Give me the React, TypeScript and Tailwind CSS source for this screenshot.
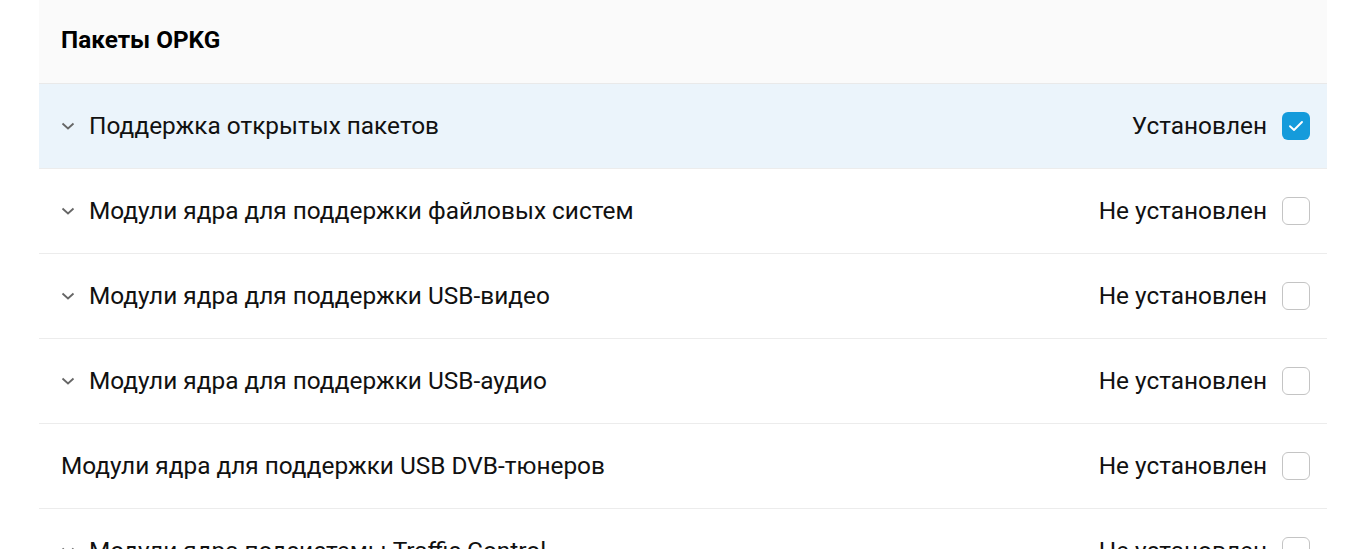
import { useState } from "react";

interface Pkg {
  id: number;
  name: string;
  installed: boolean;
  expandable: boolean;
}

const PACKAGES: Pkg[] = [
  { id: 1, name: "Поддержка открытых пакетов", installed: true, expandable: true },
  { id: 2, name: "Модули ядра для поддержки файловых систем", installed: false, expandable: true },
  { id: 3, name: "Модули ядра для поддержки USB-видео", installed: false, expandable: true },
  { id: 4, name: "Модули ядра для поддержки USB-аудио", installed: false, expandable: true },
  { id: 5, name: "Модули ядра для поддержки USB DVB-тюнеров", installed: false, expandable: false },
  { id: 6, name: "Модули ядра подсистемы Traffic Control", installed: false, expandable: true },
];

function Chevron() {
  return (
    <svg width="14" height="8" viewBox="0 0 14 8" className="shrink-0 text-[#666]" aria-hidden>
      <path d="M1.5 1.5 7 6.5l5.5-5" fill="none" stroke="currentColor" strokeWidth="1.8" />
    </svg>
  );
}

function Checkbox({ checked }: { checked: boolean }) {
  return checked ? (
    <span className="flex h-7 w-7 shrink-0 items-center justify-center rounded-[6px] bg-[#159bdb]">
      <svg width="16" height="12" viewBox="0 0 16 12" aria-hidden>
        <path d="M2 6.2 6 10l8-8" fill="none" stroke="white" strokeWidth="1.9" strokeLinecap="round" strokeLinejoin="round" />
      </svg>
    </span>
  ) : (
    <span className="h-7 w-7 shrink-0 rounded-[6px] border border-[#c4c4c4] bg-white" />
  );
}

export default function App() {
  const [selected, setSelected] = useState(1);

  return (
    <div className="h-screen overflow-hidden bg-white font-['Roboto','Liberation_Sans',sans-serif] text-[#111]">
      <div className="ml-[39px] w-[1288px]">
        <div className="flex h-[84px] items-center border-b border-[#e9e9e9] bg-[#fafafa] pl-[22px] pb-[2px]">
          <h2 className="text-[24.3px] font-bold text-black">Пакеты OPKG</h2>
        </div>
        {PACKAGES.map((p) => (
          <div
            key={p.id}
            onClick={() => setSelected(p.id)}
            className={`flex h-[85px] items-center border-b border-[#ececec] pl-[22px] pr-[17px] ${
              selected === p.id ? "bg-[#ebf4fb]" : "bg-white"
            }`}
          >
            {p.expandable && (
              <span className="mr-[15px] flex w-[13px] items-center">
                <Chevron />
              </span>
            )}
            <span className="flex-1 text-[24.4px]">{p.name}</span>
            <span className="mr-[15px] text-[24.4px]">
              {p.installed ? "Установлен" : "Не установлен"}
            </span>
            <Checkbox checked={p.installed} />
          </div>
        ))}
      </div>
    </div>
  );
}
